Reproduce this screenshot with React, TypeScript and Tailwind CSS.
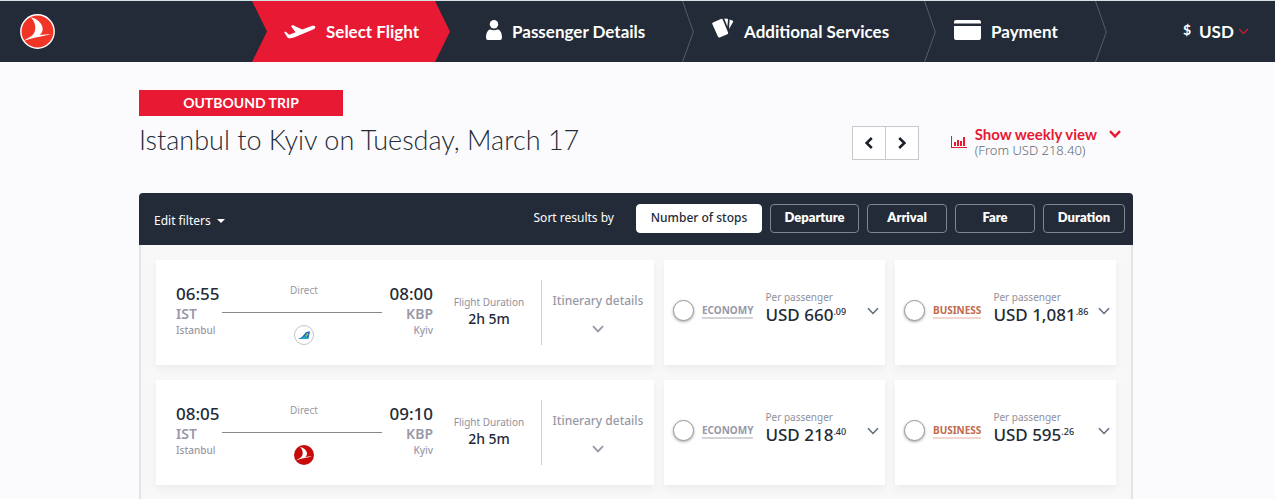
import React, { useState } from 'react';

interface Fare {
  whole: string;
  cents: string;
}

interface Flight {
  id: string;
  carrier: 'uia' | 'thy';
  departure: string;
  arrival: string;
  duration: string;
  economy: Fare;
  business: Fare;
}

const flights: Flight[] = [
  {
    id: 'f1',
    carrier: 'uia',
    departure: '06:55',
    arrival: '08:00',
    duration: '2h 5m',
    economy: { whole: '660', cents: '.09' },
    business: { whole: '1,081', cents: '.86' },
  },
  {
    id: 'f2',
    carrier: 'thy',
    departure: '08:05',
    arrival: '09:10',
    duration: '2h 5m',
    economy: { whole: '218', cents: '.40' },
    business: { whole: '595', cents: '.26' },
  },
];

const sortOptions = [
  { label: 'Number of stops', width: 'w-[126px]' },
  { label: 'Departure', width: 'w-[89px]' },
  { label: 'Arrival', width: 'w-20' },
  { label: 'Fare', width: 'w-20' },
  { label: 'Duration', width: 'w-[82px]' },
];

const Chevron: React.FC<{ className: string; weight?: number }> = ({ className, weight = 1.5 }) => (
  <svg className={className} viewBox="0 0 12 8" fill="none" stroke="currentColor" strokeWidth={weight} aria-hidden="true">
    <path d="M1 1.2L6 6.4L11 1.2" />
  </svg>
);

const BirdLogo: React.FC<{ className: string; fill: string; ring?: boolean }> = ({ className, fill, ring }) => (
  <svg className={className} viewBox="0 0 34 34" aria-hidden="true">
    <circle cx="17" cy="17" r={ring ? 16.2 : 17} fill={fill} stroke={ring ? '#fff' : 'none'} strokeWidth="1.4" />
    <path
      d="M10.500 3.200C16.500 4.500 21.800 9 22 14C22.100 17 21 18.800 19.200 20.300C23 19.900 26.500 19.600 31 19.600C23 21.200 13 22.600 3.200 26.300C7.500 23.600 12 21.800 13.800 18.300C16.200 13.500 14.500 7.500 10.500 3.200Z"
      fill="#fff"
    />
  </svg>
);

const UiaLogo: React.FC = () => (
  <svg className="h-5 w-5" viewBox="0 0 20 20" aria-hidden="true">
    <circle cx="10" cy="10" r="9.500" fill="#fff" stroke="#b5b5ba" strokeWidth="0.800" />
    <path d="M4 14C7.500 13 9.500 10.500 11.800 7.200L16 6.200L14.400 14Z" fill="#1668b8" />
    <path d="M4 14C7.500 13.300 9 12.300 10.500 11L13.800 12.500L14.400 14Z" fill="#22a7d0" />
    <path d="M11.200 10.500L13.200 7.800L14.600 9.200L12.600 11.800Z" fill="#c5cf3c" />
    <circle cx="12.900" cy="9.800" r="0.600" fill="#1668b8" />
  </svg>
);

const Separator: React.FC = () => (
  <svg className="h-full w-3 shrink-0" viewBox="0 0 12 61" preserveAspectRatio="none" fill="none" stroke="#565c67" aria-hidden="true">
    <path d="M0.500 0L11.300 31L0.500 61" />
  </svg>
);

const Header: React.FC = () => (
  <header className="flex h-[62px] items-stretch border-t border-[#d3e2e2] bg-[#232b38] font-['Lato',sans-serif] text-[17px] font-bold text-white">
    <a href="#home" aria-label="Home" className="flex w-[252px] shrink-0 items-center pl-5">
      <BirdLogo className="h-[35px] w-[35px]" fill="#f03426" ring />
    </a>
    <nav className="flex flex-1" aria-label="Booking steps">
      <a
        href="#flight"
        aria-current="step"
        className="flex w-[198px] items-center gap-2.5 bg-[#e81932] pl-8 [clip-path:polygon(0_0,183px_0,100%_50%,183px_100%,0_100%,15px_50%)]"
      >
        <svg className="h-4 w-8" viewBox="0 0 32 16" fill="#fff" aria-hidden="true">
          <path d="M0.300 8.600C0.200 8 1.600 7.600 2.100 8L5.200 10.700L11.600 8.300L7.200 2.400C7 1.700 8.700 1 9.600 1.400L18.200 5.600L27 2.200C29 1.500 31 1.700 31.300 2.800C31.600 4.100 30.200 5.100 28.500 5.800L10 13.400C7.600 14.400 4.600 14.500 3.700 13.700Z" />
        </svg>
        Select Flight
      </a>
      <a href="#passengers" className="flex w-[244px] items-center pl-9">
        <svg className="mb-1 mr-2.5 h-5 w-4 shrink-0" viewBox="0 0 16 20" fill="#fff" aria-hidden="true">
          <circle cx="8" cy="4.200" r="4.200" />
          <path d="M0 17.500C0 12 2.500 9.500 4.500 9.500Q8 11 11.500 9.500C13.500 9.500 16 12 16 17.500Q16 20 14 20H2Q0 20 0 17.500Z" />
        </svg>
        <span className="flex-1 whitespace-nowrap">Passenger Details</span>
        <Separator />
      </a>
      <a href="#services" className="flex w-[242px] items-center pl-[18px]">
        <svg className="mb-2 mr-2.5 h-5 w-[22px] shrink-0" viewBox="0 0 22 20" fill="#fff" aria-hidden="true">
          <path d="M1 4.600L9 1Q10.200 0.500 10.800 1.700L16 14.200Q16.500 15.600 15.300 16.200L7.700 19.400Q6.500 19.800 5.900 18.600L0.300 6.100Q-0.100 5.100 1 4.600Z" />
          <path d="M12.200 0.500L15.400 0.800Q16.100 0.900 16 1.700L15.400 8.500Z" />
          <path d="M17.600 1.600L20.800 2.700Q21.500 3 21.200 3.800L17 11Z" />
        </svg>
        <span className="flex-1 whitespace-nowrap">Additional Services</span>
        <Separator />
      </a>
      <a href="#payment" className="flex w-[171px] items-center pl-[18px]">
        <svg className="mb-1 mr-2.5 h-5 w-[27px] shrink-0" viewBox="0 0 27 20" fill="#fff" aria-hidden="true">
          <path d="M2 0H25Q27 0 27 2V3.600H0V2Q0 0 2 0Z" />
          <path d="M0 6H27V18Q27 20 25 20H2Q0 20 0 18Z" />
        </svg>
        <span className="flex-1">Payment</span>
        <Separator />
      </a>
    </nav>
    <label className="flex items-center pr-[26px]">
      <span className="mb-1 mr-2 text-sm">$</span>
      <select aria-label="Currency" className="appearance-none bg-transparent text-[17px] font-bold">
        <option>USD</option>
      </select>
      <Chevron className="ml-1 h-[7px] w-[11px] text-[#d01c35]" />
    </label>
  </header>
);

const FareCard: React.FC<{ flightId: string; cabin: 'ECONOMY' | 'BUSINESS'; fare: Fare }> = ({ flightId, cabin, fare }) => (
  <div className="flex items-center bg-white pr-1.5 pb-1 pl-[9px] shadow-[0_4px_8px_rgba(0,0,0,0.05)]">
    <label className="flex shrink-0 items-center gap-2">
      <input
        type="radio"
        name="fare"
        value={`${flightId}-${cabin}`}
        className="h-[21px] w-[21px] appearance-none rounded-full border border-[#9b9b9b] bg-white shadow-[0_1px_3px_rgba(0,0,0,0.35)] checked:border-[6px] checked:border-[#e81932]"
      />
      <span
        className={`border-b-2 text-[10px] leading-[14px] font-bold ${
          cabin === 'ECONOMY' ? 'border-[#d3d3d8] text-[#9899a6]' : 'border-[#f1d8ce] text-[#c4694a]'
        }`}
      >
        {cabin}
      </span>
    </label>
    <div className="ml-3 flex-1 pb-2 whitespace-nowrap">
      <p className="text-[10px] leading-4 text-[#8f909d]">Per passenger</p>
      <p className="flex text-[17px] leading-5 font-medium text-[#232b38]">
        USD {fare.whole}
        <span className="text-[9px] leading-3.5">{fare.cents}</span>
      </p>
    </div>
    <button type="button" aria-label={`${cabin} fare details`} className="text-[#5e6a7b]">
      <Chevron className="h-2 w-3" />
    </button>
  </div>
);

const FlightRow: React.FC<{ flight: Flight }> = ({ flight }) => (
  <li className="grid h-[105px] grid-cols-[1fr_221px_221px] gap-2.5">
    <article className="flex items-center bg-white pl-5 shadow-[0_4px_8px_rgba(0,0,0,0.05)]">
      <div className="flex flex-1 items-center text-[#9899a6]">
        <div className="w-[46px] pb-1.5">
          <p className="text-[17px] leading-[22px] font-medium text-[#232b38]">{flight.departure}</p>
          <p className="text-sm leading-[18px] font-semibold">IST</p>
          <p className="text-[10px] leading-[14px] font-medium">Istanbul</p>
        </div>
        <div className="flex-1 pt-0.5">
          <p className="pl-1 text-center text-[10px] leading-4">Direct</p>
          <div className="mt-3.5 mb-3 h-px bg-[#85888c]" />
          <div className="flex justify-center pl-1">
            {flight.carrier === 'uia' ? <UiaLogo /> : <BirdLogo className="h-5 w-5" fill="#c70a0c" />}
          </div>
        </div>
        <div className="w-[51px] pb-1.5 text-right">
          <p className="text-[17px] leading-[22px] font-medium text-[#232b38]">{flight.arrival}</p>
          <p className="text-sm leading-[18px] font-semibold">KBP</p>
          <p className="text-[10px] leading-[14px] font-medium">Kyiv</p>
        </div>
      </div>
      <div className="w-[108px] pb-1 pl-1 text-center">
        <p className="text-[10px] leading-4 text-[#8f909d]">Flight Duration</p>
        <p className="text-sm leading-[18px] font-medium text-[#232b38]">{flight.duration}</p>
      </div>
      <button
        type="button"
        className="flex h-[65px] w-[113px] flex-col items-center justify-center gap-4 border-l border-[#cfcfd2] text-xs font-medium whitespace-nowrap text-[#9899a6]"
      >
        Itinerary details
        <Chevron className="h-2 w-3" weight={1.8} />
      </button>
    </article>
    <FareCard flightId={flight.id} cabin="ECONOMY" fare={flight.economy} />
    <FareCard flightId={flight.id} cabin="BUSINESS" fare={flight.business} />
  </li>
);

const App: React.FC = () => {
  const [sortBy, setSortBy] = useState('Number of stops');

  return (
    <div className="bg-[#fbfbfd] font-['Noto_Sans',sans-serif] text-[#232b38]">
      <Header />
      <main className="pt-7 pr-[3px]">
        <div className="mx-auto max-w-[994px]">
          <div className="flex justify-between">
            <div>
              <p className="w-51 bg-[#e81932] text-center font-['Lato',sans-serif] text-[14px] leading-[26px] font-bold text-white">
                OUTBOUND TRIP
              </p>
              <h1 className="mt-1.5 font-['Lato',sans-serif] text-[27px] leading-9 font-light">Istanbul to Kyiv on Tuesday, March 17</h1>
            </div>
            <div className="mt-9 flex items-start pr-3">
              <div className="flex h-[34px] border border-[#c9c9cc] bg-white text-[#1c222c]">
                <button type="button" aria-label="Previous day" className="flex w-8 items-center justify-center">
                  <Chevron className="h-2 w-3 rotate-90" weight={2.6} />
                </button>
                <button type="button" aria-label="Next day" className="flex w-[33px] items-center justify-center border-l border-[#c9c9cc]">
                  <Chevron className="h-2 w-3 -rotate-90" weight={2.6} />
                </button>
              </div>
              <svg className="mt-2.5 ml-8 h-3 w-4" viewBox="0 0 16 12" fill="#e81932" aria-hidden="true">
                <path d="M0 0H1V11H16V12H0ZM3 6H5V10H3ZM6 4H8V10H6ZM9 5H11V10H9ZM12 1H14V10H12Z" />
              </svg>
              <button type="button" className="ml-2 flex items-start gap-3 text-left">
                <span>
                  <span className="block font-['Lato',sans-serif] text-[15px] leading-4 font-bold text-[#e81932]">Show weekly view</span>
                  <span className="block text-[13px] leading-4 font-light text-[#5f6a74]">(From USD 218.40)</span>
                </span>
                <Chevron className="mt-1 h-2 w-3 text-[#e81932]" weight={2.4} />
              </button>
            </div>
          </div>

          <section className="mt-[33px]">
            <div className="flex h-[52px] items-center rounded-t bg-[#232b38] pr-2 pl-[15px] text-xs text-white">
              <button type="button" className="flex items-center gap-1.5 pt-1">
                Edit filters
                <span className="border-x-4 border-t-4 border-x-transparent border-t-white" />
              </button>
              <div className="mb-0.5 ml-auto flex items-center gap-2">
                <span className="mr-3.5">Sort results by</span>
                {sortOptions.map((option) => (
                  <button
                    key={option.label}
                    type="button"
                    aria-pressed={sortBy === option.label}
                    onClick={() => setSortBy(option.label)}
                    className={`h-[29px] rounded border ${option.width} ${
                      sortBy === option.label
                        ? 'border-white bg-white font-medium text-[#232b38]'
                        : "border-[#80858d] font-['Lato',sans-serif] text-[13px] font-extrabold"
                    }`}
                  >
                    {option.label}
                  </button>
                ))}
              </div>
            </div>
            <ul className="flex flex-col gap-[15px] border-x-2 border-[#e3e4e8] bg-[#f8f8f9] px-[15px] pt-[15px] pb-3.5">
              {flights.map((flight) => (
                <FlightRow key={flight.id} flight={flight} />
              ))}
            </ul>
          </section>
        </div>
      </main>
    </div>
  );
};

export default App;
